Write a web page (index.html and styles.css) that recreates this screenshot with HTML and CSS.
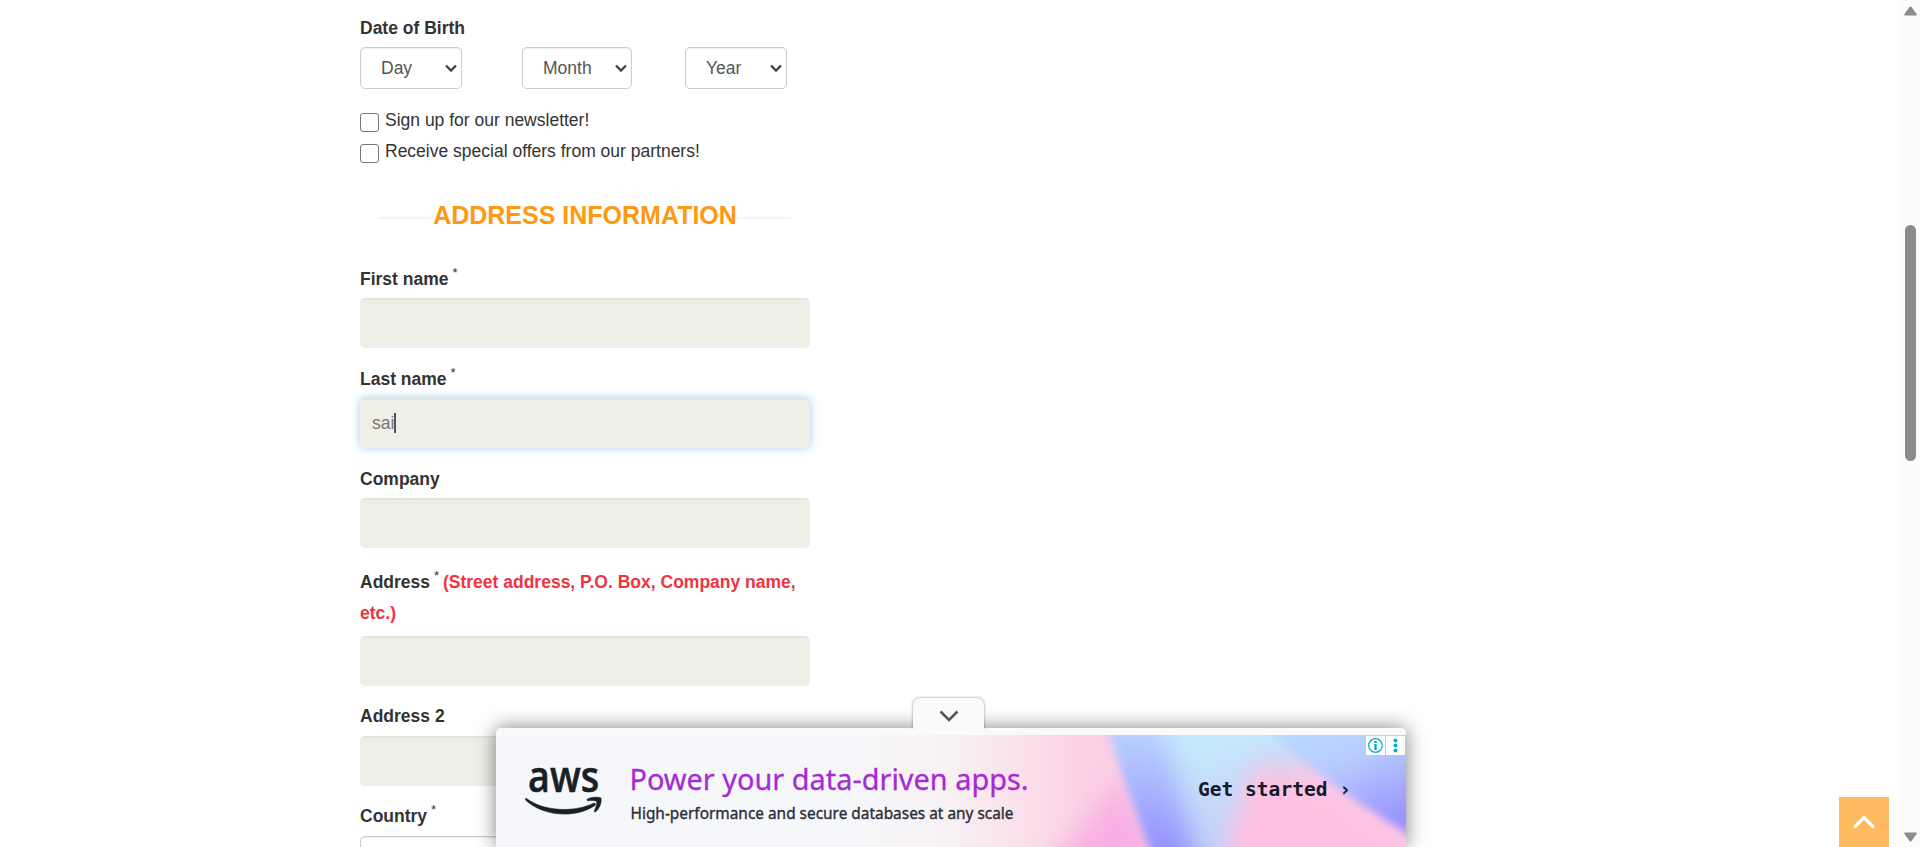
FILE: index.html
```html
<!DOCTYPE html>
<html lang="en">
<head>
<meta charset="utf-8">
<title>Create an account</title>
<link rel="stylesheet" href="styles.css">
</head>
<body>
<main class="form">
  <div class="label">Date of Birth</div>
  <div class="dates">
    <div class="select day">Day<svg class="caret" viewBox="0 0 12 8"><path d="M1 1.500 6 6.500l5-5"/></svg></div>
    <div class="select month">Month<svg class="caret" viewBox="0 0 12 8"><path d="M1 1.500 6 6.500l5-5"/></svg></div>
    <div class="select year">Year<svg class="caret" viewBox="0 0 12 8"><path d="M1 1.500 6 6.500l5-5"/></svg></div>
  </div>
  <div class="check"><span class="box"></span>Sign up for our newsletter!</div>
  <div class="check"><span class="box"></span>Receive special offers from our partners!</div>
  <h3 class="heading">ADDRESS INFORMATION</h3>
  <div class="label">First name <sup>*</sup></div>
  <div class="input"></div>
  <div class="label next">Last name <sup>*</sup></div>
  <div class="input focus">sai<span class="cursor"></span></div>
  <div class="label next">Company</div>
  <div class="input"></div>
  <div class="label tall">Address <sup>*</sup><span class="hint">(Street address, P.O. Box, Company name, etc.)</span></div>
  <div class="input"></div>
  <div class="label late">Address 2</div>
  <div class="input"></div>
  <div class="label late">Country <sup>*</sup></div>
  <div class="select country"></div>
</main>

<aside class="ad">
  <div class="tab"><svg width="20" height="14" viewBox="0 0 20 14"><path d="M1.500 2.500l8.500 8.500 8.500-8.500" fill="none" stroke="#555" stroke-width="2.600"/></svg></div>
  <svg class="creative" width="910" height="112" viewBox="0 0 910 112">
    <defs>
      <linearGradient id="base"><stop offset="0" stop-color="#f6f7fa"/><stop offset=".38" stop-color="#f6f7fa"/><stop offset=".5" stop-color="#f7f1f4"/><stop offset=".58" stop-color="#fbe0ea"/><stop offset=".65" stop-color="#fbcfe4"/><stop offset="1" stop-color="#fdc8e7"/></linearGradient>
      <linearGradient id="blue" x2="0" y2="1"><stop offset=".1" stop-color="#b8d0ff"/><stop offset=".9" stop-color="#9694ff"/></linearGradient>
      <linearGradient id="right" x2=".5" y2="1"><stop offset="0" stop-color="#b9e0ff"/><stop offset=".5" stop-color="#b8ccff"/><stop offset="1" stop-color="#9a94ff"/></linearGradient>
      <linearGradient id="cyan" x2=".25" y2="1"><stop offset=".15" stop-color="#c5f1fd"/><stop offset=".55" stop-color="#c5dcfa"/><stop offset="1" stop-color="#c2c9fa"/></linearGradient>
      <filter id="soft" x="-30%" y="-30%" width="160%" height="160%"><feGaussianBlur stdDeviation="13"/></filter>
      <filter id="edge" x="-30%" y="-30%" width="160%" height="160%"><feGaussianBlur stdDeviation="4"/></filter>
    </defs>
    <rect width="910" height="112" fill="url(#base)"/>
    <path d="M545 135Q600 85 627 40L665 130z" fill="#f59fe2" opacity=".65" filter="url(#soft)"/>
    <path d="M609-14Q628 46 658 126H780L770-14z" fill="url(#blue)" filter="url(#edge)"/>
    <path d="M662-40H810L800 150H706z" fill="url(#cyan)" filter="url(#soft)"/>
    <path d="M762 28Q830 30 960 150H725Q735 70 762 28z" fill="#ffc2e2" filter="url(#soft)"/>
    <path d="M760-20Q800 32 925 107V-20z" fill="url(#right)" filter="url(#edge)"/>
    <text x="32" y="57" class="aws" textLength="71" lengthAdjust="spacingAndGlyphs">aws</text>
    <path d="M30.500 63.500C47 76 77 78 97 68.500 99 67.500 100.500 69 99 70.500 79 84 47 81 30 65.500 29 64 29.500 62.800 30.500 63.500z" fill="#191f27" stroke="#191f27" stroke-width=".6"/>
    <path d="M91.500 64C96 61.500 103 62 105 63 106 67 103.500 73.500 100 76.500 98.500 77.500 98 77 98.500 75.500 100 72 101.500 68 100.500 66.500 99 65 95 65.500 92.500 65.700 91 66 90.500 65 91.500 64z" fill="#191f27" stroke="#191f27" stroke-width=".6"/>
    <text x="133.500" y="55" class="title" textLength="399" lengthAdjust="spacingAndGlyphs">Power your data-driven apps.</text>
    <text x="134.500" y="84" class="sub" textLength="383" lengthAdjust="spacingAndGlyphs">High-performance and secure databases at any scale</text>
    <text x="702" y="61" class="cta" textLength="153" lengthAdjust="spacingAndGlyphs">Get started ›</text>
    <path d="M870 1h19v19h-19zM890 1h19v19h-19z" fill="#fff"/>
    <circle cx="879.500" cy="10.500" r="6.800" fill="none" stroke="#00aecd" stroke-width="1.300"/>
    <path d="M878.300 9h2.400v6h-2.400zM878.300 6h2.400v2h-2.400z" fill="#00aecd"/>
    <g fill="#00aecd"><circle cx="899.500" cy="5.500" r="2"/><circle cx="899.500" cy="10.500" r="2"/><circle cx="899.500" cy="15.500" r="2"/></g>
  </svg>
</aside>

<div class="top-button"><svg width="24" height="16" viewBox="0 0 24 16"><path d="M3 12.500l9-9 9 9" fill="none" stroke="#fff" stroke-width="3.200" stroke-linecap="round"/></svg></div>

<div class="scrollbar">
  <svg width="13" height="10" viewBox="0 0 13 10"><path d="M1 9.500h11q1.200-.3.500-1.500L7.500 1Q6.500-.2 5.500 1L.5 8Q-.2 9.200 1 9.500z" fill="#8b8b8b"/></svg>
  <div class="thumb"></div>
  <svg class="down" width="13" height="10" viewBox="0 0 13 10"><path d="M1 .5h11q1.200.3.500 1.500L7.500 9Q6.500 10.200 5.500 9L.5 2Q-.2.800 1 .5z" fill="#8b8b8b"/></svg>
</div>
</body>
</html>
```
FILE: styles.css
```css
* { box-sizing: border-box; }
body {
  margin: 0;
  height: 847px;
  overflow: hidden;
  background: #fff;
  color: #333;
  font: 17.5px/30px "Liberation Sans", Arial, sans-serif;
}
.form { width: 450px; margin-left: 360px; padding-top: 13px; }
.label { height: 30px; margin-bottom: 4px; font-weight: 700; white-space: nowrap; }
.label sup { margin-left: -1px; font-size: 13px; font-weight: 400; line-height: 0; vertical-align: 8px; }
.label.next { margin-top: 16px; }
.label.tall { height: 62px; margin: 19px 0 7px; line-height: 31px; white-space: normal; }
.label.late { margin: 15px 0 5px; }
.hint { color: #f13340; margin-left: 4px; }
.dates { display: flex; margin-bottom: 16px; }
.select {
  display: flex;
  align-items: center;
  justify-content: space-between;
  height: 42px;
  padding: 0 4px 0 20px;
  border: 1px solid #ccc;
  border-radius: 5px;
  box-shadow: inset 0 1px 1px rgba(0, 0, 0, .075);
  background: #fff;
  color: #555;
}
.day { width: 102px; }
.month { width: 110px; margin-left: 60px; }
.year { width: 102px; margin-left: 53px; }
.country { width: 450px; }
.caret { width: 12px; height: 8px; fill: none; stroke: #444; stroke-width: 2.4; }
.check { display: flex; height: 31px; line-height: 31px; }
.box { width: 19px; height: 19px; margin: 8px 6px 0 0; border: 1px solid #767676; border-radius: 3px; background: #fff; }
.heading {
  display: flex;
  align-items: center;
  height: 30px;
  margin: 33px 19px 34px;
  color: #ff9912;
  font-size: 25px;
  line-height: 30px;
  white-space: nowrap;
}
.heading::before, .heading::after { content: ""; flex: 1; height: 2px; margin-top: 6px; background: #f4f4f4; }
.input {
  display: flex;
  align-items: center;
  height: 50px;
  padding: 0 11px;
  border: 1px solid #efeee7;
  border-top-color: #e2e1da;
  border-radius: 5px;
  background: #efeee7;
  box-shadow: inset 0 1px 1px rgba(0, 0, 0, .04);
  color: #777;
}
.input.focus { box-shadow: inset 0 1px 1px rgba(0, 0, 0, .04), 0 0 10px rgba(102, 175, 233, .6); }
.cursor { width: 2px; height: 20px; background: #555; }
.ad {
  position: fixed;
  left: 496px;
  bottom: 0;
  width: 910px;
  height: 119px;
  padding-top: 7px;
  border-radius: 5px 5px 0 0;
  background: #fafafa;
  box-shadow: 0 0 20px rgba(0, 0, 0, .5);
}
.tab {
  position: absolute;
  left: 417px;
  top: -30px;
  display: flex;
  align-items: center;
  justify-content: center;
  width: 71px;
  height: 31px;
  padding-top: 4px;
  border-radius: 7px 7px 0 0;
  background: #fafafa;
  box-shadow: 0 0 3px rgba(0, 0, 0, .45);
  clip-path: inset(-5px -5px 0 -5px);
}
.creative { display: block; }
.aws { font: 600 44px "Open Sans", sans-serif; fill: #191f27; stroke: #191f27; stroke-width: .6px; }
.title { font: 400 29.5px "Noto Sans", sans-serif; fill: #a62bd2; stroke: #a62bd2; stroke-width: .3px; }
.sub { font: 400 16.5px "Noto Sans", sans-serif; fill: #2b2d38; stroke: #2b2d38; stroke-width: .35px; }
.cta { font: 700 19px "DejaVu Sans Mono", monospace; fill: #161b2c; }
.top-button {
  position: fixed;
  left: 1839px;
  bottom: 0;
  display: flex;
  align-items: center;
  justify-content: center;
  width: 50px;
  height: 50px;
  background: #ffb95f;
}
.scrollbar {
  position: fixed;
  top: 0;
  right: 0;
  display: flex;
  flex-direction: column;
  align-items: center;
  width: 19px;
  height: 847px;
  padding: 6px 0 5px;
  background: #fcfcfc;
}
.thumb { width: 11px; height: 236px; margin-top: 209px; border-radius: 6px; background: #8b8b8b; }
.down { margin-top: auto; }
```
